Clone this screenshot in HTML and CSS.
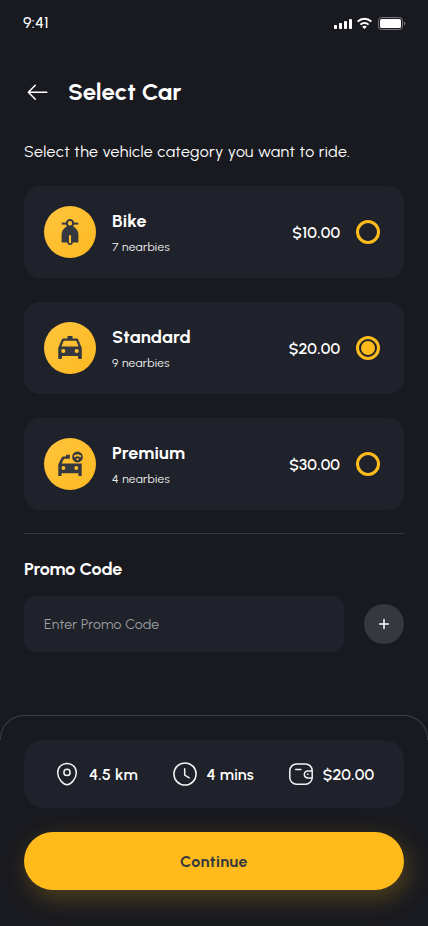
FILE: index.html
```html
<!DOCTYPE html>
<html lang="en">
<head>
<meta charset="utf-8">
<meta name="viewport" content="width=device-width, initial-scale=1">
<title>Select Car</title>
<link rel="stylesheet" href="styles.css">
</head>
<body>
<div class="app">
  <div class="status">
    <span class="time">9:41</span>
    <svg class="status-icons" width="72" height="14" viewBox="0 0 72 14" fill="#fff">
      <rect x="0" y="9" width="3" height="4" rx=".8"/><rect x="5" y="7" width="3" height="6" rx=".8"/><rect x="10" y="5" width="3" height="8" rx=".8"/><rect x="15" y="3" width="3" height="10" rx=".8"/>
      <g fill="none" stroke="#fff" stroke-width="2"><path d="M23.6 5.6a9.9 9.9 0 0 1 13.8 0"/><path d="M26.4 8.6a5.9 5.9 0 0 1 8.2 0"/></g>
      <path d="M28.2 10.7a3.4 3.4 0 0 1 4.6 0L30.5 13z"/>
      <rect x="44.5" y="1.5" width="24" height="12" rx="3" fill="none" stroke="#77787b"/>
      <rect x="46" y="3" width="21" height="9" rx="1.6"/><path d="M70 5.5q1.3.6 1.3 2t-1.3 2z" fill="#77787b"/>
    </svg>
  </div>
  <header class="header">
    <svg width="28" height="28" viewBox="0 0 28 28" fill="none" stroke="#fff" stroke-width="1.5" stroke-linecap="round" stroke-linejoin="round"><path d="M22.8 14.3H4.3M11.3 7.3l-7 7 7 7"/></svg>
    <h1 class="title">Select Car</h1>
  </header>
  <p class="intro">Select the vehicle category you want to ride.</p>
  <div class="cars">
    <div class="car">
      <span class="badge"><svg width="28" height="28" viewBox="0 0 28 28"><path fill="#35383f" d="M9.6 9.2Q10.6 7.8 12 7.4h4q1.4.4 2.4 1.8Q22.4 12 22.4 17V24.6H5.6V17Q5.6 12 9.6 9.2z"/><path d="M5.8 5.6h16.4" stroke="#35383f" stroke-width="2"/><circle cx="14" cy="5.3" r="3.2" fill="#febe2b" stroke="#35383f" stroke-width="2"/><rect x="12.1" y="16.2" width="3.8" height="10" rx="1.9" fill="#febe2b" stroke="#35383f" stroke-width="1.7"/></svg></span>
      <div class="info"><h2 class="name">Bike</h2><p class="near">7 nearbies</p></div>
      <span class="price">$10.00</span><span class="radio"></span>
    </div>
    <div class="car">
      <span class="badge"><svg width="28" height="28" viewBox="0 0 28 28"><path fill="#35383f" fill-rule="evenodd" d="M11.5 2h5v2.6h4c1 0 1.6.5 1.9 1.4L25.8 14v9.8q0 1.2-1.1 1.2h-1.5q-1.2 0-1.2-1.2V22H6v1.8Q6 25 4.8 25H3.3q-1.1 0-1.1-1.2V14L5.6 6q.4-1.4 1.9-1.4h4zM7.7 6.7L5.4 12.4h17.2L20.3 6.7z"/><circle cx="7.3" cy="17" r="2.1" fill="#febe2b"/><circle cx="20.7" cy="17" r="2.1" fill="#febe2b"/></svg></span>
      <div class="info"><h2 class="name">Standard</h2><p class="near">9 nearbies</p></div>
      <span class="price">$20.00</span><span class="radio on"></span>
    </div>
    <div class="car">
      <span class="badge"><svg width="28" height="28" viewBox="0 0 28 28"><path fill="#35383f" fill-rule="evenodd" d="M10 4.8h3.8V8.7H8L5.7 13.6h20V26h-3.3v-2.7H5.5V26H2.3V14.2L5.9 7.2Q6.3 6.6 7.2 6.6H10z"/><circle cx="7.4" cy="18" r="1.9" fill="#febe2b"/><circle cx="20.3" cy="18" r="1.9" fill="#febe2b"/><circle cx="21.5" cy="7" r="6.2" fill="#febe2b"/><circle cx="21.5" cy="7" r="5.4" fill="#35383f"/><path d="M18.1 6.7q3.4-2.9 6.8 0" fill="none" stroke="#febe2b" stroke-width="2"/><path d="M20 8.9q1.5-1.2 3 0l-1.5 1.7z" fill="#febe2b"/></svg></span>
      <div class="info"><h2 class="name">Premium</h2><p class="near">4 nearbies</p></div>
      <span class="price">$30.00</span><span class="radio"></span>
    </div>
  </div>
  <section class="promo">
    <h2 class="promo-title">Promo Code</h2>
    <div class="promo-row">
      <div class="field">Enter Promo Code</div>
      <div class="add"><svg width="20" height="20" viewBox="0 0 20 20" stroke="#fff" stroke-width="1.5" stroke-linecap="round"><path d="M10 5.6v8.8M5.6 10h8.8"/></svg></div>
    </div>
  </section>
  <footer class="sheet">
    <div class="summary">
      <div class="stat"><svg width="28" height="28" viewBox="0 0 28 28" fill="none" stroke="#f3f3f3" stroke-width="1.5"><path d="M4.7 12.8C4.7 7 8.7 3.5 14 3.5s9.3 3.5 9.3 9.3C23.3 18.9 17.8 24.7 14 24.7S4.7 18.9 4.7 12.8z"/><circle cx="14" cy="12.4" r="3.1"/></svg><span class="value">4.5 km</span></div>
      <div class="stat"><svg width="28" height="28" viewBox="0 0 28 28" fill="none" stroke="#f3f3f3" stroke-width="1.5" stroke-linecap="round" stroke-linejoin="round"><circle cx="14" cy="14" r="11.1"/><path d="M13.7 8.8v6.3l4.5 2.7"/></svg><span class="value">4 mins</span></div>
      <div class="stat"><svg width="28" height="28" viewBox="0 0 28 28" fill="none" stroke="#f3f3f3" stroke-width="1.5" stroke-linecap="round"><rect x="2.8" y="3.9" width="22.4" height="20.4" rx="6.8"/><path d="M8.7 9.5h5.2M25 10.9h-4.2a3.5 3.5 0 0 0 0 7H25"/><path d="M20.6 14.2h.4"/></svg><span class="value value-cost">$20.00</span></div>
    </div>
    <button class="continue">Continue</button>
  </footer>
</div>
</body>
</html>
```
FILE: styles.css
```css
* { box-sizing: border-box; }
body, h1, h2, p { margin: 0; }
body { background: #191a1f; color: #fff; font-family: Urbanist, Lato, sans-serif; }
svg { display: block; flex: none; }
.app { width: 428px; height: 926px; display: flex; flex-direction: column; overflow: hidden; }
.status { height: 44px; padding: 1px 22px 0 23px; display: flex; align-items: center; justify-content: space-between; }
.time { font-size: 16px; font-weight: 500; letter-spacing: 0.2px; }
.header { height: 48px; margin-top: 24px; padding: 0 24px; display: flex; align-items: center; gap: 16px; }
.title { font-size: 24px; line-height: 30px; font-weight: 700; letter-spacing: .1px; }
.intro { height: 24px; margin: 24px 24px 0; font-size: 16px; line-height: 24px; letter-spacing: .36px; white-space: nowrap; }
.cars { margin: 22px 24px 0; display: flex; flex-direction: column; gap: 24px; }
.car { height: 92px; padding: 0 24px 0 20px; border-radius: 16px; background: #1f222a; display: flex; align-items: center; }
.badge { width: 52px; height: 52px; margin-right: 16px; border-radius: 50%; background: linear-gradient(135deg, #ffc43d, #fdb921); display: flex; align-items: center; justify-content: center; }
.info { flex: 1; }
.name { padding-top: 2px; font-size: 18px; line-height: 25px; font-weight: 700; letter-spacing: .2px; }
.near { margin-top: 3px; font-size: 12px; line-height: 20px; letter-spacing: .35px; color: #eee; }
.price { font-size: 16px; font-weight: 600; letter-spacing: .25px; margin-right: -.25px; }
.radio { width: 24px; height: 24px; margin-left: 16px; border: 3px solid #febb1b; border-radius: 50%; display: flex; align-items: center; justify-content: center; }
.radio.on::after { content: ""; width: 14px; height: 14px; border-radius: 50%; background: #febb1b; }
.promo { margin: 23px 24px 0; border-top: 1px solid #35383f; padding-top: 23px; }
.promo-title { font-size: 18px; line-height: 24px; font-weight: 700; letter-spacing: -.05px; }
.promo-row { margin-top: 15px; display: flex; align-items: center; gap: 20px; }
.field { flex: 1; height: 56px; padding: 1px 20px 0; border-radius: 12px; background: #1f222a; color: #9e9fa1; font-size: 14px; line-height: 56px; letter-spacing: .2px; }
.add { width: 40px; height: 40px; border-radius: 50%; background: #35383f; display: flex; align-items: center; justify-content: center; }
.sheet { position: relative; height: 211px; margin-top: auto; padding: 25px 24px 0; }
.sheet::before { content: ""; position: absolute; top: 0; left: 0; right: 0; height: 24px; border: 1px solid #3d3f46; border-bottom: 0; border-radius: 24px 24px 0 0; }
.summary { height: 68px; padding: 0 30px 0 29px; border-radius: 20px; background: #1f222a; display: flex; align-items: center; justify-content: space-between; }
.stat { display: flex; align-items: center; gap: 8px; }
.value { font-size: 16px; font-weight: 600; letter-spacing: .15px; margin-right: -.15px; }
.value-cost { letter-spacing: .25px; margin-right: -.25px; }
.continue { display: block; width: 100%; height: 58px; margin-top: 24px; padding: 0; border: 0; border-radius: 29px; background: #febb1b; color: #35383f; box-shadow: 4px 8px 24px rgba(251, 187, 27, .25); font: 700 16px Urbanist, Lato, sans-serif; letter-spacing: .45px; }
```
